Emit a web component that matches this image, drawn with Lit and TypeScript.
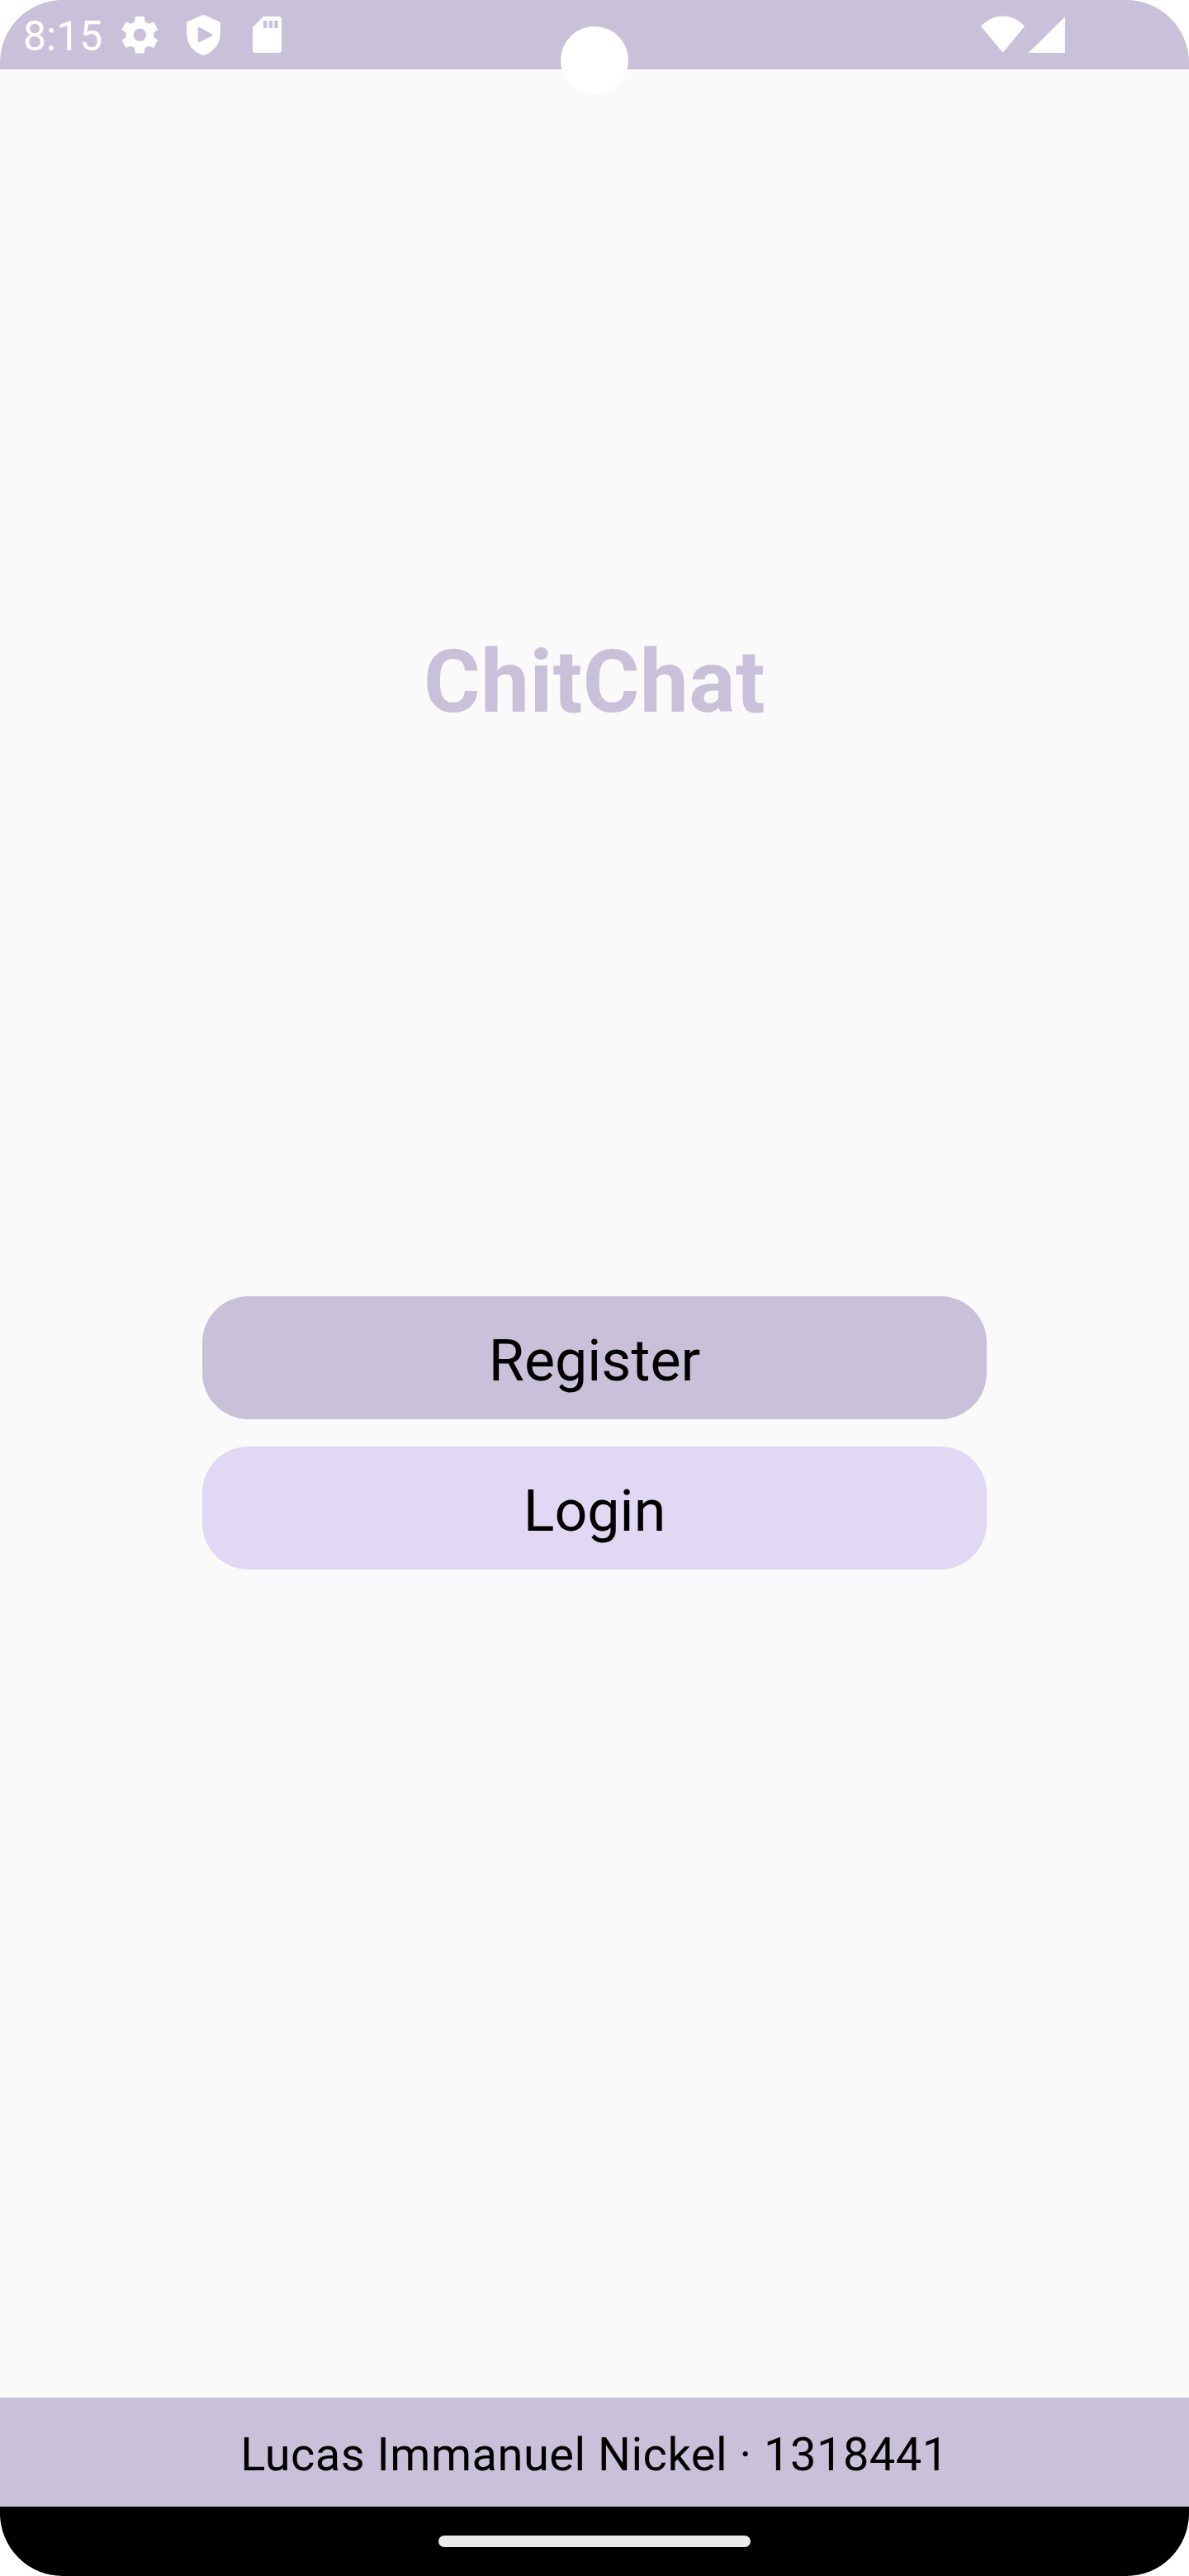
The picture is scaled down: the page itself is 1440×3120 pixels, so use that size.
import { LitElement, html, css } from "lit";
import { customElement } from "lit/decorators.js";

@customElement("app-root")
export class AppRoot extends LitElement {
  static styles = css`
    :host {
      display: block;
      background: #ffffff;
      font-family: Roboto, "Liberation Sans", sans-serif;
      color: #000000;
    }
    .screen {
      position: relative;
      box-sizing: border-box;
      width: 1440px;
      height: 3120px;
      display: flex;
      flex-direction: column;
      overflow: hidden;
      border-radius: 76px;
      background: #fafafa;
    }
    .status {
      flex: none;
      box-sizing: border-box;
      height: 84px;
      display: flex;
      align-items: center;
      padding: 0 150px 0 28px;
      background: #c9c1da;
      color: #ffffff;
    }
    .clock {
      width: 119px;
      font-size: 50px;
      line-height: 58px;
      padding-top: 3px;
      white-space: nowrap;
    }
    .icons {
      display: flex;
      gap: 34px;
      flex: 1;
    }
    .icon {
      display: block;
      width: 45px;
      height: 56px;
      fill: #ffffff;
      fill-rule: evenodd;
    }
    .rounded {
      stroke: #ffffff;
      stroke-width: 2;
      stroke-linejoin: round;
    }
    .shield {
      width: 46px;
    }
    .signals {
      display: block;
      width: 102px;
      height: 45px;
      fill: #ffffff;
      overflow: visible;
    }
    .camera {
      position: absolute;
      left: 679px;
      top: 32px;
      width: 82px;
      height: 82px;
      border-radius: 50%;
      background: #ffffff;
    }
    .main {
      flex: 1;
      display: flex;
      flex-direction: column;
      align-items: center;
    }
    .title {
      margin: 681px 0 0;
      font-size: 105px;
      line-height: 124px;
      font-weight: 700;
      letter-spacing: 0.5px;
      color: #c9c1da;
    }
    .actions {
      display: flex;
      flex-direction: column;
      gap: 33px;
      width: 950px;
      margin-top: 681px;
    }
    .button {
      box-sizing: border-box;
      height: 149px;
      margin: 0;
      padding: 7px 0 0;
      border: 0;
      border-radius: 56px;
      font: 400 70px/82px Roboto, "Liberation Sans", sans-serif;
      color: #000000;
      background: #e1d9f3;
    }
    .primary {
      background: #c9c1da;
    }
    .footer {
      flex: none;
      box-sizing: border-box;
      height: 132px;
      padding-top: 5px;
      display: flex;
      align-items: center;
      justify-content: center;
      font-size: 56px;
      line-height: 66px;
      letter-spacing: 0.5px;
      background: #c9c1da;
    }
    .nav {
      flex: none;
      height: 84px;
      display: flex;
      align-items: center;
      justify-content: center;
      background: #000000;
    }
    .handle {
      width: 378px;
      height: 14px;
      border-radius: 7px;
      background: #ebebeb;
    }
  `;

  render() {
    return html`
      <div class="screen">
        <header class="status">
          <div class="clock">8:15</div>
          <div class="icons">
            <svg class="icon" viewBox="-22.3 -28.3 45 56">
              <path
                class="rounded"
                d="M-5.3-15L-4.5-21.3H4.5L5.3-15Q8-14 10.34-12.09L16.2-14.55L20.7-6.75L15.64-2.91Q16.100 0 15.64 2.91L20.7 6.75L16.2 14.55L10.34 12.09Q8 14 5.3 15L4.5 21.3H-4.5L-5.3 15Q-8 14-10.34 12.09L-16.2 14.55L-20.7 6.75L-15.64 2.91Q-16.100 0-15.64-2.91L-20.7-6.75L-16.2-14.55L-10.34-12.09Q-8-14-5.3-15ZM8.700 0A8.700 8.700 0 1 0-8.700 0A8.700 8.700 0 1 0 8.700 0Z"
              />
            </svg>
            <svg class="icon shield" viewBox="0 0 46 56">
              <path
                d="M20.400 3.800L40.700 12.800V27C40.700 39 32.500 49.500 20.400 53C8.300 49.500 .100 39 .100 27V12.800ZM13.700 20.600V35.800Q13.700 38 15.700 37L30.800 29.500Q32.800 28.300 30.800 27.200L15.700 19.300Q13.700 18.500 13.700 20.600Z"
              />
            </svg>
            <svg class="icon" viewBox="0 0 45 56">
              <path
                d="M13 6H31.500Q35 6 35 9.500V46.500Q35 50 31.500 50H3.500Q0 50 0 46.500V19ZM13 11V20H17.300V11ZM19.700 11V20H24V11ZM26.200 11V20H30.800V11Z"
              />
            </svg>
          </div>
          <svg class="signals" viewBox="0 0 102 45">
            <path d="M0 11.800C15-4.700 38-4.700 53 11.800L26.500 43.800Z" />
            <path d="M101.800 .300V44H57.700Z" />
          </svg>
        </header>
        <main class="main">
          <h1 class="title">ChitChat</h1>
          <div class="actions">
            <button class="button primary">Register</button>
            <button class="button">Login</button>
          </div>
        </main>
        <footer class="footer">Lucas Immanuel Nickel · 1318441</footer>
        <div class="nav"><div class="handle"></div></div>
        <div class="camera"></div>
      </div>
    `;
  }
}
